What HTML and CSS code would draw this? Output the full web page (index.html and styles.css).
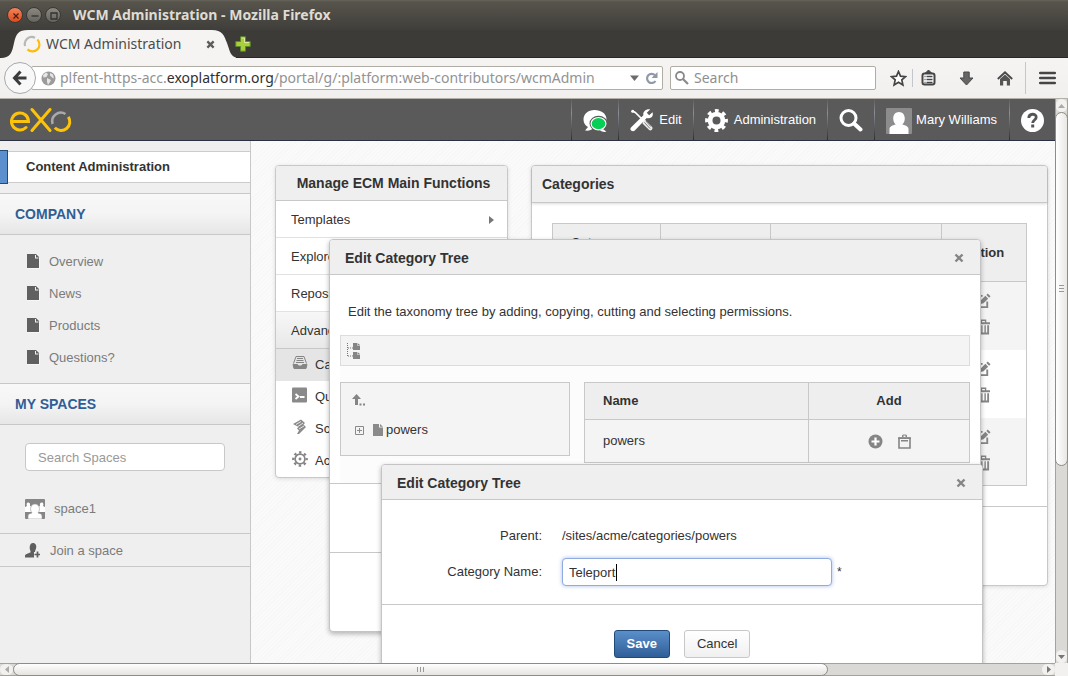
FILE: index.html
```
<!DOCTYPE html>
<html lang="en">
<head>
<meta charset="utf-8">
<title>WCM Administration</title>
<link rel="stylesheet" href="styles.css">
</head>
<body>
<svg class="defs" aria-hidden="true">
  <symbol id="page" viewBox="0 0 13 15"><path d="M0 .5h8v4h4.500v10H0z" fill="#fff"/><path d="M0 0h9l3 3v11H0z" fill="#606060"/><path d="M8 1v3.500h3.500v-1H9V1z" fill="#efefef"/></symbol>
  <symbol id="edit" viewBox="0 0 16 16"><path d="M7 3H1v12h11V9" fill="none" stroke="#858585" stroke-width="2"/><path d="M4 12l1-4 5-5 3 3-5 5zM11 2l1.500-1.500 3 3L14 5z" fill="#858585"/></symbol>
  <symbol id="trash" viewBox="0 0 14 16"><path d="M0 3h14v2H0zM4 0h6v3H8.500V1.500h-3V3H4zM1 6h12v10H1zM3 6v8h1.500V6zM6 6v8h2V6zM9.500 6v8H11V6z" fill="#858585" fill-rule="evenodd"/></symbol>
  <symbol id="close" viewBox="0 0 10 10"><path d="M1.500 1.500l7 7m0-7l-7 7" stroke="#858585" stroke-width="2.400"/></symbol>
</svg>

<header class="titlebar">
  <button class="wbtn wbtn-close" aria-label="Close window"><svg width="16" height="16" viewBox="0 0 16 16"><path d="M5.500 5.500l5 5m0-5l-5 5" stroke="#4a2012" stroke-width="1.300"/></svg></button>
  <button class="wbtn" aria-label="Minimize"><svg width="16" height="16" viewBox="0 0 16 16"><path d="M4.500 8h7" stroke="#33322e" stroke-width="1.300"/></svg></button>
  <button class="wbtn" aria-label="Maximize"><svg width="16" height="16" viewBox="0 0 16 16"><path d="M5 5h6v6H5z" fill="none" stroke="#33322e" stroke-width="1.300"/></svg></button>
  <span class="window-title">WCM Administration - Mozilla Firefox</span>
</header>

<div class="tabs">
  <div class="tab">
    <svg class="tab-shape" viewBox="0 0 236 28" aria-hidden="true"><path d="M0 28C11 28 12 22 14 13S18 0 28 0H212C222 0 224 5 227 13S230 28 240 28z" fill="#f5f4f3"/></svg>
    <svg class="favicon" width="18" height="18" viewBox="0 0 18 18" fill="none" stroke-width="2.200"><path d="M2.100 11A7 7 0 0 1 12 2.700" stroke="#b7b7b7"/><path d="M14.400 4.500A7 7 0 0 1 4.500 14.400" stroke="#fdbb0c"/></svg>
    <span class="tab-title">WCM Administration</span>
    <button class="plain tab-close" aria-label="Close tab"><svg width="9" height="9" viewBox="0 0 10 10"><path d="M1.500 1.500l7 7m0-7l-7 7" stroke="#5c5c5a" stroke-width="2.600"/></svg></button>
  </div>
  <button class="plain" aria-label="New tab"><svg width="16" height="16" viewBox="0 0 16 16"><path d="M5.500 .8h5v4.700h4.700v5h-4.700v4.700h-5v-4.700H.8v-5h4.700z" fill="#a9cf3e" stroke="#5d8a24"/><path d="M6.500 2h3v4.500H14" fill="none" stroke="#dcec9a"/></svg></button>
</div>

<nav class="toolbar">
  <button class="back" aria-label="Back"><svg width="16" height="16" viewBox="0 0 16 16"><path d="M8.500 1.500L2.500 8l6 6.500M3 8h11.500" fill="none" stroke="#3c3c3c" stroke-width="3"/></svg></button>
  <div class="urlbar">
    <svg width="15" height="15" viewBox="0 0 15 15"><circle cx="7.500" cy="7.500" r="7" fill="#9b9b9b"/><path d="M2 4l3-2.500 2 1.500-1.500 3-3 .5zM9 2l3 1.500 1 4-2-1-2-2zM6 7l4 2-1 2-2 3-1-3z" fill="#e6e6e6"/></svg>
    <div class="url" role="textbox" aria-label="Address">plfent-https-acc.<b>exoplatform.org</b>/portal/g/:platform:web-contributors/wcmAdmin</div>
    <svg width="9" height="6" viewBox="0 0 9 6"><path d="M0 .5h9L4.500 6z" fill="#6b6b6b"/></svg>
    <button class="plain" aria-label="Reload"><svg width="13" height="13" viewBox="0 0 13 13"><path d="M10 3.200A4.600 4.600 0 1 0 10.500 9" fill="none" stroke="#8f9aa6" stroke-width="2.200"/><path d="M12.500 0v6H6.500z" fill="#8f9aa6"/></svg></button>
  </div>
  <label class="findbar">
    <svg width="14" height="14" viewBox="0 0 14 14"><circle cx="5" cy="5" r="4" fill="none" stroke="#8a8a8a" stroke-width="1.800"/><path d="M8 8l5 5" stroke="#8a8a8a" stroke-width="2.200"/></svg>
    <input type="text" placeholder="Search" aria-label="Search the web">
  </label>
  <div class="tools">
    <button class="plain" aria-label="Bookmark"><svg width="17" height="17" viewBox="0 0 17 17"><path d="M8.500 1.500l2 4.600 5 .5-3.700 3.300 1.100 5-4.400-2.600-4.400 2.600 1.100-5L1.500 6.600l5-.5z" fill="#fff" stroke="#454545" stroke-width="1.700"/></svg></button>
    <i class="tool-sep"></i>
    <button class="plain" aria-label="Bookmarks"><svg width="15" height="16" viewBox="0 0 15 16" fill="none" stroke="#454545"><rect x="1.500" y="3.500" width="12" height="11" rx="2" fill="#fff" stroke-width="2"/><path d="M4.500 3L7.500 0l3 3z" fill="#454545"/><path d="M3.500 6.500h1m1 0h6m-8 3h1m1 0h6m-8 3h1m1 0h6" stroke-width="1.400"/></svg></button>
    <button class="plain gap-l" aria-label="Downloads"><svg width="15" height="15" viewBox="0 0 15 15"><path d="M4.800 1h5.400v6h3.800L7.500 14 1 7h3.800z" fill="#666" stroke="#484848"/></svg></button>
    <button class="plain gap-l" aria-label="Home"><svg width="16" height="15" viewBox="0 0 16 15"><path d="M.8 8L8 1.300 15.200 8" fill="none" stroke="#484848" stroke-width="1.800"/><path d="M3 8l5-4.600L13 8v6.500H9.800V10H6.200v4.500H3z" fill="#555"/></svg></button>
    <i class="tool-sep tall"></i>
    <button class="plain" aria-label="Menu"><svg width="17" height="14" viewBox="0 0 17 14"><path d="M1.200 2h14.600M1.200 7h14.600M1.200 12h14.600" stroke="#454545" stroke-width="2.600" stroke-linecap="round"/></svg></button>
  </div>
</nav>

<div class="viewport">
<div class="site">
  <header class="portal-bar">
    <a href="#" class="logo" aria-label="eXo"><svg width="62" height="26" viewBox="0 0 62 26" fill="none" stroke="#fdc30a" stroke-width="3"><path d="M1.500 14.500H18.500A8.500 8.500 0 1 0 16 20.500M22 2.500L40 23.500M40 2.500L22 23.500" stroke-linecap="round"/><path d="M42.600 17A8.700 8.700 0 0 1 55.500 7" stroke="#a9a9ad" stroke-width="2.600"/><path d="M58.300 9.800A8.700 8.700 0 0 1 44.800 20.700"/></svg></a>
    <nav class="portal-nav">
      <a href="#" aria-label="Chat"><svg width="24" height="24" viewBox="0 0 24 24"><path d="M11.500 1C5 1 .5 5 .5 10.500c0 3.500 1.800 6 4.500 7.500L2 21.500c4 .5 6.500-.5 8-2 6 .5 13.500-3 13.500-9C23.500 4.500 18 1 11.500 1z" fill="#fff"/><ellipse cx="15.500" cy="14.500" rx="9" ry="7.800" fill="#5a5a5a"/><path d="M20 20l3.500 2.800c-3 .3-5 0-6.500-1.500z" fill="#fff"/><ellipse cx="15.500" cy="14.700" rx="7.400" ry="6.200" fill="#06cf55" stroke="#fff" stroke-width="1.200"/></svg></a>
      <a href="#"><svg width="23" height="23" viewBox="0 0 24 24"><path d="M2.500 2l3 1.500L14 12" stroke="#fff" stroke-width="1.800" fill="none"/><circle cx="2.800" cy="2.300" r="1.600" fill="#fff"/><path d="M13.500 13l2-2 7.500 7.500c1.500 2-1 5-3 3.500l-7-7z" fill="#eee"/><path d="M15 14l6 6.500m-4.500-8l5.500 6" stroke="#5a5a5a" stroke-width=".8"/><path d="M21 .5l-3.500 3.500 2.500 2.500 3.500-3C25 7.500 21.500 10.500 17.500 9.500L5 22.500c-1.500 1.500-4 .5-4.500-1-.3-1 0-2 1-2.800L14 6.500C13 3 17-.5 21 .5z" fill="#fff"/></svg><span>Edit</span></a>
      <a href="#"><svg width="23" height="23" viewBox="0 0 24 24" fill="none" stroke="#fff"><circle cx="12" cy="12" r="10.200" stroke-width="3.400" stroke-dasharray="4 4.010" stroke-dashoffset="2"/><circle cx="12" cy="12" r="6.700" stroke-width="5"/></svg><span>Administration</span></a>
      <a href="#" aria-label="Search"><svg width="24" height="23" viewBox="0 0 24 23" fill="none" stroke="#fff"><circle cx="9.500" cy="9" r="7.500" stroke-width="3"/><path d="M15 14.500l6.500 6" stroke-width="4" stroke-linecap="round"/></svg></a>
      <a href="#" class="user"><svg width="26" height="26" viewBox="0 0 26 26"><rect width="26" height="26" rx="1" fill="#8c8c8c"/><path d="M13 4c3.500 0 5.800 2.800 5.800 6.500 0 2.500-1 4.500-2.500 6 3 .8 6.200 2 6.200 4.500v5h-19v-5c0-2.500 3.200-3.700 6.200-4.500-1.500-1.500-2.500-3.500-2.500-6C7.200 6.800 9.500 4 13 4z" fill="#fff"/></svg><span>Mary Williams</span></a>
      <a href="#" aria-label="Help"><svg width="23" height="23" viewBox="0 0 23 23"><circle cx="11.500" cy="11.500" r="11.500" fill="#fff"/><path d="M7.800 9c0-5 7.400-4.800 7.400-.7 0 2.700-3.500 2.700-3.500 5.700" fill="none" stroke="#555" stroke-width="2.800"/><rect x="10.200" y="15.500" width="3" height="3" fill="#555"/></svg></a>
    </nav>
  </header>

  <div class="columns">
    <aside class="sidebar">
      <a href="#" class="current">Content Administration</a>
      <h2>Company</h2>
      <ul class="links">
        <li><a href="#"><svg width="13" height="15"><use href="#page"/></svg>Overview</a></li>
        <li><a href="#"><svg width="13" height="15"><use href="#page"/></svg>News</a></li>
        <li><a href="#"><svg width="13" height="15"><use href="#page"/></svg>Products</a></li>
        <li><a href="#"><svg width="13" height="15"><use href="#page"/></svg>Questions?</a></li>
      </ul>
      <h2>My Spaces</h2>
      <input class="space-search" type="text" placeholder="Search Spaces" aria-label="Search Spaces">
      <a href="#" class="space"><svg width="20" height="20" viewBox="0 0 20 20"><rect width="20" height="20" rx="1" fill="#858585"/><path d="M0 13V8l2-1C0 3 6 2 5 7l3 1v5zM20 13V8l-2-1c2-4-4-5-3 0l-3 1v5z" fill="#fff"/><path d="M3 20v-3c0-2 2-2.500 4-3-3-4-1-9 3-9s6 5 3 9c2 .5 4 1 4 3v3z" fill="#fff" stroke="#999" stroke-width=".6"/></svg>space1</a>
      <a href="#" class="join"><svg width="15" height="16" viewBox="0 0 15 16"><path d="M8 0c2.500 0 4 2.500 3 5.500C10.500 7 10 8 10 9H9v5.500H0V13c0-2 3-2.500 5.500-3.500V8C4 5 4.500 0 8 0z" fill="#5f5f5f"/><path d="M12.500 8.500v6m-3-3h6" stroke="#5f5f5f" stroke-width="1.700"/></svg>Join a space</a>
    </aside>

    <main class="content">
      <section class="menu panel">
        <h1>Manage ECM Main Functions</h1>
        <a href="#" class="group">Templates<svg width="5" height="8" viewBox="0 0 5 8"><path d="M0 0l5 4-5 4z" fill="#777"/></svg></a>
        <a href="#" class="group">Explorer</a>
        <a href="#" class="group">Repository</a>
        <a href="#" class="group open">Advanced</a>
        <a href="#" class="sub selected"><svg width="16" height="16" viewBox="0 0 16 16" fill="none" stroke="#858585"><path d="M1.500 8.500l2.500-7h8l2.500 7M5 3.500h6M4.500 5.500h7M4 7.500h8" stroke-width="1"/><path d="M1 9.500h4.500l1 1.500h3l1-1.500H15l-1 4H2z" fill="#858585"/></svg>Categories</a>
        <a href="#" class="sub"><svg width="16" height="16" viewBox="0 0 16 16"><rect y=".5" width="15" height="15" rx="1" fill="#8a8a8a"/><path d="M3.500 7l3 2.500-3 2.500M8 10h4.500" fill="none" stroke="#fff" stroke-width="1.800"/></svg>Queries</a>
        <a href="#" class="sub"><svg width="16" height="16" viewBox="0 0 16 16"><path d="M1 5l8-4.500 4 3.500-1.500 1.500L14 8l-1.500 1.500L7 15H5l2-3.500L5 9.500 6.500 8z" fill="#8a8a8a"/><path d="M4 5.500l5-3m-3 5l5-3.500M7 10l5-3" stroke="#e8e8e8"/></svg>Scripts</a>
        <a href="#" class="sub"><svg width="16" height="16" viewBox="0 0 24 24" fill="none" stroke="#858585"><circle cx="12" cy="12" r="10" stroke-width="3.600" stroke-dasharray="3.600 4.254" stroke-dashoffset="1.800"/><circle cx="12" cy="12" r="7.300" stroke-width="2.600"/><circle cx="12" cy="12" r="1.200" stroke-width="2"/></svg>Actions</a>
      </section>

      <section class="categories panel">
        <h1>Categories</h1>
        <div class="table-area">
          <table class="grid">
            <colgroup><col class="c1"><col class="c2"><col><col class="c4"></colgroup>
            <thead><tr><th>Category Name</th><th></th><th></th><th class="center">Action</th></tr></thead>
            <tbody>
              <tr><td></td><td></td><td></td><td><div class="actions"><svg width="15" height="15"><use href="#edit"/></svg><svg width="13" height="16"><use href="#trash"/></svg></div></td></tr>
              <tr><td></td><td></td><td></td><td><div class="actions"><svg width="15" height="15"><use href="#edit"/></svg><svg width="13" height="16"><use href="#trash"/></svg></div></td></tr>
              <tr><td></td><td></td><td></td><td><div class="actions"><svg width="15" height="15"><use href="#edit"/></svg><svg width="13" height="16"><use href="#trash"/></svg></div></td></tr>
            </tbody>
          </table>
        </div>
        <footer></footer>
      </section>
    </main>
  </div>

  <section class="dialog tree-dialog" role="dialog" aria-label="Edit Category Tree">
    <header><h2>Edit Category Tree</h2><button class="plain" aria-label="Close"><svg width="10" height="10"><use href="#close"/></svg></button></header>
    <p>Edit the taxonomy tree by adding, copying, cutting and selecting permissions.</p>
    <div class="tree-tools"><svg width="14" height="16" viewBox="0 0 14 16"><path d="M.5 0v13M1 5h5M1 13h5" stroke="#777" stroke-dasharray="1 1"/><path d="M6 0h4v2.500h3V7H6zM6 9h4v2.500h3V16H6z" fill="#858585"/><path d="M10.500 0L13 2h-2.500zM10.500 9L13 11h-2.500z" fill="#858585"/></svg></div>
    <div class="tree-cols">
      <div class="tree">
        <a href="#" class="up" aria-label="Up"><svg width="14" height="12" viewBox="0 0 14 12"><path d="M4.500 0L9 5H6v6H3V5H0zM7.500 9.500h2v2h-2zM11 9.500h2v2h-2z" fill="#858585"/></svg></a>
        <a href="#" class="node"><svg width="9" height="9" viewBox="0 0 9 9"><path d="M.5.5h8v8h-8zM2 4.500h5M4.500 2v5" fill="none" stroke="#8a8a8a"/></svg><svg width="10" height="12" viewBox="0 0 10 12"><path d="M0 0h6v3.500h4V12H0z" fill="#8a8a8a"/><path d="M7 0l3 2.800H7z" fill="#8a8a8a"/></svg>powers</a>
      </div>
      <table class="grid node-table">
        <thead><tr><th>Name</th><th class="center add-col">Add</th></tr></thead>
        <tbody><tr><td>powers</td><td><div class="row-tools"><button class="plain" aria-label="Add"><svg width="15" height="15" viewBox="0 0 15 15"><circle cx="7.500" cy="7.500" r="7" fill="#858585"/><path d="M7.500 3.500v8m-4-4h8" stroke="#fff" stroke-width="2.200"/></svg></button><button class="plain" aria-label="Paste"><svg width="13" height="15" viewBox="0 0 13 15"><path d="M1 4h11v10H1z" fill="none" stroke="#858585" stroke-width="1.600"/><path d="M0 3.500h13v1.500H0zM3 6h7v1.500H3zM4 3V1.500C4 0 9 0 9 1.500V3H7.500V1.500h-2V3z" fill="#858585"/></svg></button></div></td></tr></tbody>
      </table>
    </div>
    <div class="band"></div>
    <footer></footer>
  </section>

  <section class="dialog name-dialog" role="dialog" aria-label="Edit Category Tree">
    <header><h2>Edit Category Tree</h2><button class="plain" aria-label="Close"><svg width="10" height="10"><use href="#close"/></svg></button></header>
    <form>
      <div class="field"><span class="label">Parent:</span><span>/sites/acme/categories/powers</span></div>
      <div class="field"><label class="label" for="cat">Category Name:</label><span class="entry"><input id="cat" type="text" value="Teleport"><i class="caret"></i></span><sup>*</sup></div>
      <div class="buttons"><button class="btn primary" type="button">Save</button><button class="btn" type="button">Cancel</button></div>
    </form>
  </section>
</div>

<div class="vscroll"><span class="cap"><svg width="7" height="4" viewBox="0 0 7 4"><path d="M3.500 0L7 4H0z" fill="#aaa"/></svg></span><span class="thumb"><svg width="5" height="8" viewBox="0 0 5 8"><path d="M0 .5h5M0 3.500h5M0 6.500h5" stroke="#999"/></svg></span><span class="rest"></span><span class="cap"><svg width="7" height="4" viewBox="0 0 7 4"><path d="M0 0h7L3.500 4z" fill="#777"/></svg></span></div>
<div class="hscroll"><span class="cap"><svg width="4" height="7" viewBox="0 0 4 7"><path d="M4 0v7L0 3.500z" fill="#aaa"/></svg></span><span class="thumb"><svg width="8" height="5" viewBox="0 0 8 5"><path d="M.5 0v5M3.500 0v5M6.500 0v5" stroke="#999"/></svg></span><span class="rest"></span><span class="cap"><svg width="4" height="7" viewBox="0 0 4 7"><path d="M0 0l4 3.500L0 7z" fill="#777"/></svg></span></div>
</div>
</body>
</html>
```
FILE: styles.css
```
* { box-sizing: border-box; }
html, body { height: 100%; }
body {
  margin: 0;
  display: flex;
  flex-direction: column;
  overflow: hidden;
  background: #f2f1f0;
  color: #333;
  font: 13px/20px "Liberation Sans", Arial, sans-serif;
}
a { color: inherit; text-decoration: none; }
svg { display: block; flex: none; }
input, button { font: inherit; color: inherit; }
h1, h2, p, ul { margin: 0; padding: 0; }
.defs { position: absolute; width: 0; height: 0; }
.plain { border: 0; padding: 0; background: none; }

/* Browser window */
.titlebar, .tabs, .toolbar { font-family: "Noto Sans", "Open Sans", sans-serif; font-size: 14px; flex: none; }
.titlebar {
  height: 30px;
  display: flex;
  align-items: center;
  gap: 3px;
  padding-left: 7px;
  background: linear-gradient(#66635a, #57544c 2px, #3f3e3a);
}
.wbtn {
  width: 16px;
  height: 16px;
  padding: 0;
  border: 1px solid #3a3935;
  border-radius: 50%;
  display: grid;
  place-items: center;
  background: linear-gradient(#8a8880, #67655e);
}
.wbtn-close { background: linear-gradient(#f4825c, #df4a1c); }
.window-title { margin-left: 9px; font-weight: bold; color: #dfdbd2; white-space: nowrap; }
.tabs {
  height: 28px;
  display: flex;
  align-items: center;
  gap: 10px;
  background: #3c3b37;
  box-shadow: inset 0 -1px #2a2926;
}
.tab { position: relative; width: 225px; height: 28px; display: flex; align-items: center; padding: 0 10px 0 23px; }
.tab > * { position: relative; }
.tab > .tab-shape { position: absolute; inset: 0 auto auto 0; width: 236px; height: 28px; }
.tab-title { margin-left: 5px; flex: 1; white-space: nowrap; color: #4c4c4c; }
.toolbar {
  height: 41px;
  display: flex;
  align-items: center;
  padding: 0 12px 0 4px;
  background: linear-gradient(#f5f4f3, #f1f0ee);
  border-bottom: 1px solid #b3b0a8;
}
.back {
  position: relative;
  width: 32px;
  height: 32px;
  padding: 0;
  border: 1px solid #a9a9ab;
  border-radius: 50%;
  background: #f9f8f8;
  display: grid;
  place-items: center;
}
.urlbar, .findbar {
  height: 24px;
  display: flex;
  align-items: center;
  border: 1px solid #b0ada5;
  border-radius: 2px;
  background: #fff;
}
.urlbar { flex: 1; min-width: 0; margin-left: -5px; padding: 0 4px 0 9px; }
.url { flex: 1; min-width: 0; margin-left: 4px; overflow: hidden; white-space: nowrap; color: #939393; }
.url b { font-weight: normal; color: #2f2f2f; }
.urlbar .plain { margin-left: 6px; }
.findbar { width: 206px; margin-left: 7px; padding-left: 4px; gap: 5px; }
.findbar input { flex: 1; min-width: 0; border: 0; outline: 0; padding: 0; background: none; }
.findbar input::placeholder { color: #8f8f8f; }
.tools { display: flex; align-items: center; margin-left: 14px; }
.tool-sep { width: 1px; height: 18px; margin: 0 8px 0 5px; background: #c3c7cc; }
.tool-sep.tall { height: 32px; margin: 0 13px 0 12px; }
.gap-l { margin-left: 23px; }

.viewport { flex: 1; min-height: 0; display: grid; grid-template: minmax(0, 1fr) 13px / minmax(0, 1fr) 13px; }
.vscroll, .hscroll { display: flex; background: #dbd9d6; }
.vscroll { flex-direction: column; border: solid #a5a29c; border-width: 0 1px; }
.hscroll { border: solid #a5a29c; border-width: 1px 0; }
.cap { flex: none; display: grid; place-items: center; background: #f2f1f0; border-radius: 6px; }
.vscroll .cap { height: 13px; }
.hscroll .cap { width: 13px; }
.thumb { display: grid; place-items: center; border: 1px solid #8f8c86; border-radius: 7px; }
.vscroll .thumb { flex: 355; margin: 0 -1px; background: linear-gradient(90deg, #fff, #e8e7e5); }
.hscroll .thumb { flex: 815; margin: -1px 0; background: linear-gradient(#fff, #e4e3e1); }
.vscroll .rest { flex: 185; }
.hscroll .rest { flex: 214; }

/* Portal */
.site {
  position: relative;
  overflow: hidden;
  display: flex;
  flex-direction: column;
  background: repeating-linear-gradient(135deg, #fafafa 0 2px, #f7f7f7 2px 3px);
}
.portal-bar {
  height: 42px;
  flex: none;
  display: flex;
  justify-content: space-between;
  align-items: stretch;
  padding-left: 10px;
  background: #5a5a5a;
  border-bottom: 1px solid #2b3040;
  color: #fff;
}
.logo { align-self: center; }
.portal-nav { display: flex; }
.portal-nav a {
  display: flex;
  align-items: center;
  gap: 6px;
  padding: 2px 11px 0;
  border-left: 1px solid;
  border-image: linear-gradient(#5a5a5a, #8a8f98 35%, #2a2a2a) 1;
}
.portal-nav .user { gap: 4px; padding: 3px 12px 0 11px; }
.portal-nav span { margin-top: -2px; }
.columns { flex: 1; display: flex; align-items: stretch; }
.sidebar {
  width: 251px;
  flex: none;
  padding-top: 10px;
  background: #efefef;
  border-right: 1px solid #c8c8c8;
  color: #7b7b7b;
}
.current {
  display: flex;
  align-items: center;
  height: 32px;
  margin-bottom: 10px;
  background: #fff;
  border: solid #ccc;
  border-width: 1px 0;
  font-weight: bold;
  color: #333;
}
.current::before { content: ""; width: 7px; height: 32px; margin-right: 18px; background: #5b8fcd; border: 1px solid #244a75; border-left-width: 0; }
.sidebar h2 {
  height: 42px;
  padding-left: 15px;
  line-height: 40px;
  border: solid #c8c8c8;
  border-width: 1px 0;
  background: linear-gradient(#f8f8f8, #f4f4f4 50%, #e6e6e6);
  font-size: 14px;
  text-transform: uppercase;
  color: #2f5e97;
}
.links { list-style: none; padding: 10px 0 10px 27px; }
.links a { height: 32px; display: flex; align-items: center; gap: 9px; padding-top: 1px; }
.space-search {
  display: block;
  width: 200px;
  height: 28px;
  margin: 18px 0 0 25px;
  padding: 0 12px;
  border: 1px solid #c8c8c8;
  border-radius: 4px;
  background: #fff;
}
.space-search::placeholder { color: #999; }
.space, .join { display: flex; align-items: center; gap: 9px; padding-left: 25px; border-bottom: 1px solid #c8c8c8; }
.space { height: 63px; padding-top: 13px; }
.join { height: 33px; gap: 10px; padding-top: 1px; }

.content { flex: 1; min-width: 0; display: flex; align-items: flex-start; gap: 23px; padding: 24px 7px 0 24px; }
.panel { background: #fff; border: 1px solid #c8c8c8; border-radius: 4px; box-shadow: 0 1px 4px rgba(0, 0, 0, .12); }
.panel h1 { background: #efefef; border-bottom: 1px solid #c8c8c8; border-radius: 3px 3px 0 0; font-size: 14px; }
.menu { width: 233px; flex: none; }
.menu h1 { height: 35px; line-height: 34px; text-align: center; padding-left: 4px; white-space: nowrap; }
.group { height: 37px; display: flex; align-items: center; justify-content: space-between; padding: 2px 13px 0 15px; border-bottom: 1px solid #e2e2e2; }
.group.open { background: linear-gradient(#f7f7f7, #e8e8e8); border-color: #c8c8c8; }
.sub { height: 32px; display: flex; align-items: center; gap: 7px; padding-left: 16px; }
.sub svg { margin-top: -4px; }
.selected { background: #e5e5e5; }
.categories { flex: 1; min-width: 0; }
.categories h1 { height: 37px; line-height: 36px; padding-left: 10px; box-shadow: 0 1px 3px rgba(0, 0, 0, .15); }
.table-area { padding: 20px; border-bottom: 1px solid #c8c8c8; }
.categories footer { height: 78px; }
.grid { width: 100%; border-collapse: collapse; table-layout: fixed; border: 1px solid #c8c8c8; }
.grid th { height: 58px; padding: 0 18px; background: #eee; border: 1px solid #c8c8c8; text-align: left; line-height: 20px; }
.grid .center { text-align: center; padding: 0; }
.grid td { height: 68px; padding: 0; }
.grid tbody tr:nth-child(odd) { background: #f4f4f4; }
.c1 { width: 108px; }
.c2 { width: 110px; }
.c4 { width: 85px; }
.actions { display: flex; flex-direction: column; align-items: center; gap: 11px; padding-bottom: 3px; }

/* Dialogs */
.dialog { position: absolute; background: #fff; border: 1px solid #c4c4c4; border-radius: 4px; box-shadow: 0 2px 5px rgba(0, 0, 0, .28); }
.dialog > header {
  height: 35px;
  display: flex;
  align-items: center;
  justify-content: space-between;
  padding: 1px 16px 0 15px;
  background: #efefef;
  border-bottom: 1px solid #c8c8c8;
  border-radius: 3px 3px 0 0;
}
.dialog h2 { font-size: 14px; }
.tree-dialog { left: 329px; top: 140px; width: 652px; }
.tree-dialog p { padding: 27px 18px 13px; }
.tree-tools { height: 31px; margin: 0 10px; padding: 7px 6px; background: #f4f4f4; border: 1px solid #ddd; }
.tree-cols { display: flex; align-items: flex-start; gap: 14px; margin: 0 10px; padding: 16px 0 20px; background: #fcfcfc; }
.tree { width: 230px; height: 74px; padding: 10px; background: #f4f4f4; border: 1px solid #c8c8c8; }
.up { display: block; padding: 1px 0 0 1px; }
.node { display: flex; align-items: center; margin-top: 14px; padding-left: 4px; }
.node svg + svg { margin: 0 3px 0 9px; }
.node-table { flex: 1; width: auto; }
.node-table th { height: 37px; }
.node-table td { height: 43px; padding: 0 18px; border-right: 1px solid #c8c8c8; }
.add-col { width: 161px; }
.row-tools { display: flex; justify-content: center; gap: 15px; }
.band { height: 70px; border: solid #c8c8c8; border-width: 1px 0; }
.tree-dialog footer { height: 78px; }
.name-dialog { left: 381px; top: 365px; width: 602px; }
.field { display: flex; align-items: center; height: 36px; }
.label { width: 160px; margin-right: 20px; text-align: right; }
.name-dialog form { padding-top: 18px; }
.entry { position: relative; width: 270px; height: 28px; }
.entry input { width: 100%; height: 28px; padding: 0 6px; border: 1px solid #8fabe0; border-radius: 4px; outline: 0; box-shadow: 0 0 4px #a8bde6; }
.caret { position: absolute; left: 54px; top: 6px; width: 1px; height: 17px; background: #000; }
.field sup { margin-left: 5px; line-height: 14px; font-size: 12px; }
.buttons { display: flex; justify-content: center; gap: 14px; margin-top: 14px; padding: 25px 0; border-top: 1px solid #c8c8c8; }
.btn { height: 28px; padding: 0 12px; border: 1px solid #c8c8c8; border-radius: 3px; background: linear-gradient(#fff, #f0f0f0); }
.primary { border-color: #224a78; background: linear-gradient(#5a8fca, #305f98); color: #fff; font-weight: bold; }
```
